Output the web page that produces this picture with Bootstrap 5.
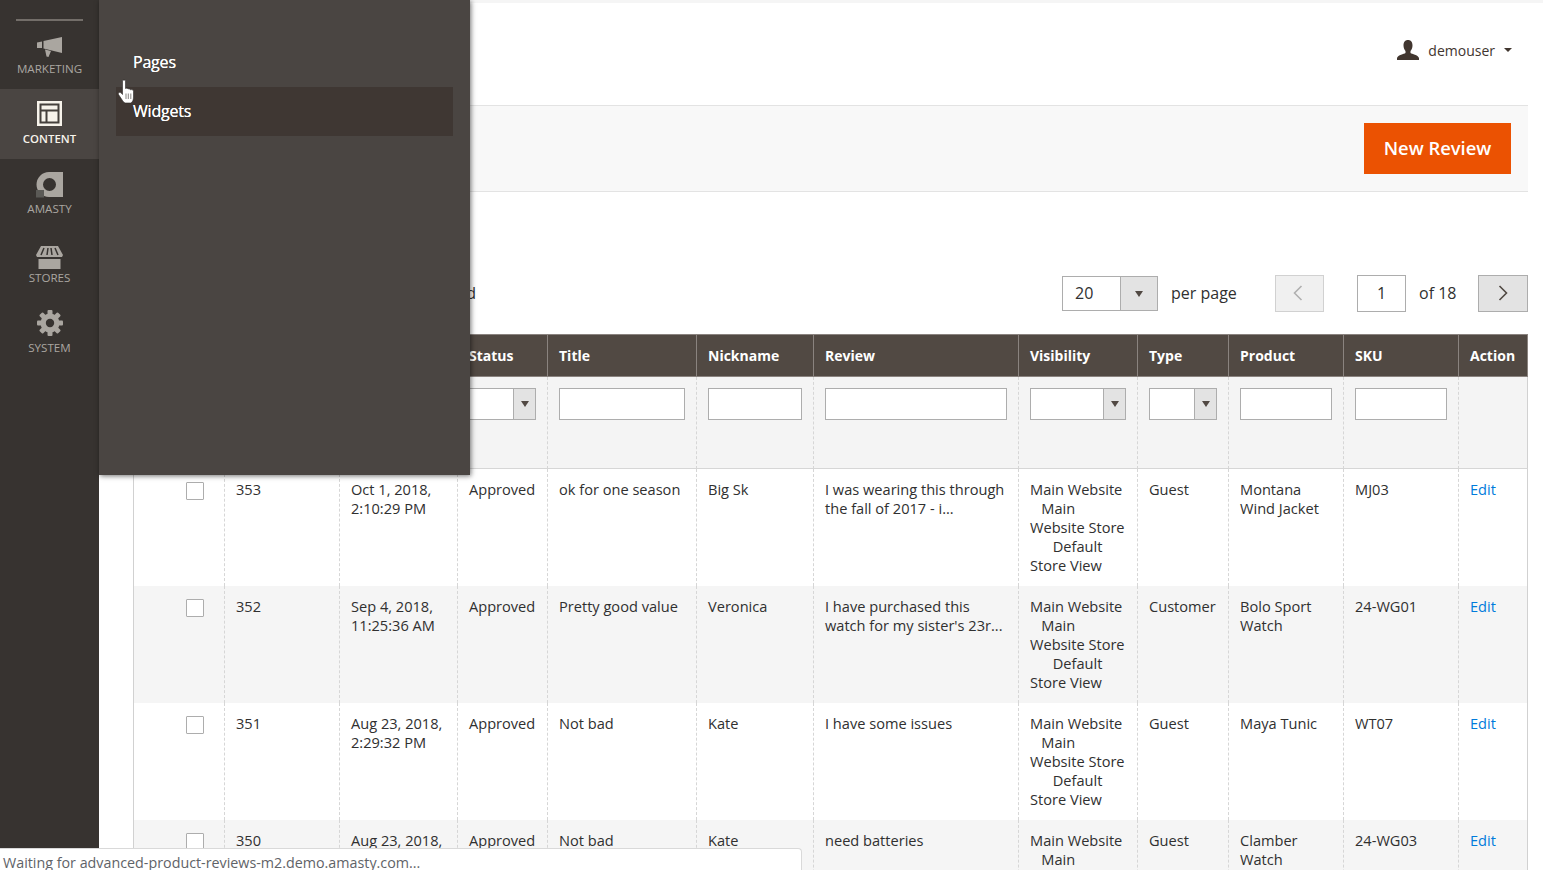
<!DOCTYPE html>
<html lang="en">
<head>
    <meta charset="UTF-8">
    <title>Reviews</title>
    <link href="https://cdn.jsdelivr.net/npm/bootstrap@5.3.2/dist/css/bootstrap.min.css" rel="stylesheet">
    <style>
        html, body { height: 870px; overflow: hidden; }
        body { font-family: "Open Sans", "Liberation Sans", sans-serif; font-size: 14px; line-height: 19px; color: #303030; background: #fff; }

        /* left menu */
        .side-menu { width: 99px; background: #373330; padding-top: 19px; }
        .side-rule { height: 2px; margin: 0 16px; background: #736e69; }
        .side-item { height: 70px; padding-top: 14px; color: #aaa6a0; font-size: 11.6px; line-height: 16px; text-transform: uppercase; text-align: center; }
        .side-item svg { display: block; margin: 0 auto 4px; fill: #aaa6a0; }
        .side-item.is-active { background: #4a4542; color: #f7f3eb; font-weight: 600; font-size: 11.4px; padding-top: 12px; }
        .side-item.is-active svg { margin-bottom: 5px; }
        .side-first { height: 68px; padding-top: 10px; }
        .side-amasty { padding-top: 13px; }
        .side-amasty svg { margin-bottom: 3px; }
        .side-stores { padding-top: 14px; }
        .side-stores .side-icon-box { margin-bottom: 1px; }
        .side-system { padding-top: 11px; }
        .side-icon-box { height: 26px; margin-bottom: 4px; display: flex; align-items: flex-end; justify-content: center; }
        .side-icon-box svg { margin: 0 auto; }

        .fly-menu { top: 0; left: 99px; width: 371px; height: 475px; background: #4a4542; box-shadow: 1px 1px 5px rgba(0,0,0,.55); padding: 38px 17px 0; }
        .fly-link { display: block; height: 49px; padding: 0 17px; color: #fff; font-size: 16px; line-height: 49px; letter-spacing: -.2px; text-decoration: none; text-shadow: 0 0 .6px #fff; }
        .fly-link.is-hover { background: #3f3733; }
        .hand-cursor { top: 79px; left: 118px; }

        /* header and action bar */
        .top-strip { height: 3px; background: #f5f5f5; }
        .top-head { height: 102px; padding: 0 31px 8px 0; }
        .user-name { color: #41362f; font-size: 14px; margin-left: 9px; }
        .user-caret { width: 0; height: 0; margin-left: 9px; border: 4px solid transparent; border-top: 4.5px solid #41362f; border-bottom: 0; }
        .action-bar { height: 87px; margin-right: 15px; padding-right: 17px; background: #f8f8f8; border-top: 1px solid #e3e3e3; border-bottom: 1px solid #e3e3e3; }
        .btn-new { width: 147px; height: 51px; padding: 0 0 2px; border: 0; border-radius: 0; background: #eb5202; color: #fff; font-size: 18.4px; font-weight: 600; line-height: 49px; }

        /* pager row */
        .grid-area { padding: 83px 15px 0 34px; }
        .pager-bar { height: 37px; margin-bottom: 22px; font-size: 16px; color: #303030; }
        .found-text { width: 343px; margin-right: 586px; text-align: right; }
        .size-select { width: 96px; height: 35px; border: 1px solid #adadad; background: #fff; }
        .size-select b { flex: 1; padding-left: 12px; font-weight: 400; line-height: 33px; }
        .arrow-box { background: #e3e3e3; border-left: 1px solid #adadad; }
        .arrow-box::after { content: ""; width: 0; height: 0; border: 4.5px solid transparent; border-top: 6px solid #514943; border-bottom: 0; }
        .size-select .arrow-box { width: 37px; }
        .per-page { width: 117px; padding-left: 13px; }
        .pager-btn { width: 49px; height: 37px; padding: 0 0 2px; border: 1px solid #adadad; background: #e3e3e3; color: #514943; }
        .pager-btn svg { display: block; margin: 0 auto; }
        .pager-btn.is-next { width: 50px; }
        .pager-btn.is-off { padding-right: 3px; background: #f0f0f0; border-color: #d1d1d1; color: #b0b0b0; }
        .page-box { width: 49px; height: 37px; margin-left: 33px; border: 1px solid #adadad; text-align: center; line-height: 35px; }
        .of-text { width: 72px; padding-left: 13px; }

        /* grid */
        .review-grid { table-layout: fixed; width: 1395px; margin: 0; border-collapse: separate; border-spacing: 0; font-size: 14.6px; }
        .review-grid col:nth-child(1) { width: 91px; }
        .review-grid col:nth-child(2) { width: 115px; }
        .review-grid col:nth-child(3) { width: 118px; }
        .review-grid col:nth-child(4) { width: 90px; }
        .review-grid col:nth-child(5) { width: 149px; }
        .review-grid col:nth-child(6) { width: 117px; }
        .review-grid col:nth-child(7) { width: 205px; }
        .review-grid col:nth-child(8) { width: 119px; }
        .review-grid col:nth-child(9) { width: 91px; }
        .review-grid col:nth-child(10) { width: 115px; }
        .review-grid col:nth-child(11) { width: 115px; }
        .review-grid col:nth-child(12) { width: 70px; }
        .review-grid > :not(caption) > * > * { padding: 11px 11px 11px; border: 0; box-shadow: none; background: transparent; color: #303030; vertical-align: top; }
        .review-grid > thead > .head-row > th { height: 43px; padding: 11px 11px 0; background: #514943; color: #fff; font-weight: 700; font-size: 14px; white-space: nowrap; border-top: 1px solid #8a837f; border-bottom: 1px solid #8a837f; border-left: 1px solid #8a837f; }
        .review-grid > thead > .head-row > th:last-child { border-right: 1px solid #8a837f; }
        .review-grid > thead > .filter-row > td { height: 92px; padding: 11px 11px 0; background: #f4f4f4; border-bottom: 1px solid #d6d6d6; border-left: 1px dashed #d6d6d6; }
        .review-grid > tbody > tr > td { height: 117px; border-left: 1px dashed #d6d6d6; }
        .review-grid > tbody > tr:nth-child(even) > td { background: #f5f5f5; }
        .review-grid > * > tr > *:first-child { border-left: 1px solid #d1d1d1; }
        .review-grid > * > tr > *:last-child { border-right: 1px solid #d1d1d1; }
        .filter-input { height: 32px; min-height: 32px; padding: 0 8px; border: 1px solid #adadad; border-radius: 0; background: #fff; }
        .filter-select { height: 32px; border: 1px solid #adadad; background: #fff; }
        .filter-select .arrow-box { width: 22px; }
        .row-check { display: block; width: 18px; height: 18px; margin: 2px 0 0 41px; border: 1px solid #adadad; border-radius: 1px; background: #fff; }
        .edit-link { color: #007bdb; text-decoration: none; }

        /* browser status bubble */
        .status-bubble { left: 0; bottom: 0; width: 802px; height: 22px; padding-left: 3px; background: #fff; border-top: 1px solid #d9d9d9; border-right: 1px solid #d9d9d9; border-top-right-radius: 4px; color: #5f6368; font-size: 14.3px; line-height: 27px; overflow: hidden; }
    </style>
</head>
<body>
    <div class="d-flex position-relative">
        <!-- Left menu -->
        <nav class="side-menu flex-shrink-0 vh-100">
            <div class="side-rule"></div>
            <div class="side-item side-first">
                <div class="side-icon-box">
                    <svg width="25" height="20" viewBox="0 0 25 20"><path d="M0 5.500 5 4.500V11H0ZM6.500 4 25 0V16L6.500 11.500ZM8 12.500 14 14 11.500 20 9.500 19.500Z"/></svg>
                </div>
                Marketing
            </div>
            <div class="side-item is-active">
                <svg width="25" height="25" viewBox="0 0 25 25">
                    <rect width="25" height="25" fill="#f7f3eb"/>
                    <path d="M3.500 3.500H21.500V21.500H3.500ZM3.500 9.500H21.500M9.500 9.500V21.500" fill="none" stroke="#45403c" stroke-width="2"/>
                </svg>
                Content
            </div>
            <div class="side-item side-amasty">
                <svg width="27" height="26" viewBox="0 0 27 26">
                    <path fill-rule="evenodd" d="M13 0H27V25H13A12.500 12.500 0 0 1 13 0ZM13.500 6A6.500 6.500 0 1 0 13.500 19 6.500 6.500 0 0 0 13.500 6Z"/>
                    <rect y="18" width="8" height="7.500" fill="#5b5a56"/>
                </svg>
                Amasty
            </div>
            <div class="side-item side-stores">
                <div class="side-icon-box">
                    <svg width="27" height="23" viewBox="0 0 27 23">
                        <path d="M5 0H22L27 9 26 11H1L0 9ZM2.500 13H24.500V23H2.500Z"/>
                        <path d="M8 2 5 9M12 2 11 9M15 2 16 9M19 2 22 9" stroke="#373330" stroke-width="1.500" fill="none"/>
                    </svg>
                </div>
                Stores
            </div>
            <div class="side-item side-system">
                <div class="side-icon-box">
                    <svg width="26" height="26" viewBox="0 0 26 26">
                        <circle cx="13" cy="13" r="9.500"/>
                        <rect x="10.500" y="0" width="5" height="26" rx="1"/>
                        <rect x="10.500" y="0" width="5" height="26" rx="1" transform="rotate(45 13 13)"/>
                        <rect x="10.500" y="0" width="5" height="26" rx="1" transform="rotate(90 13 13)"/>
                        <rect x="10.500" y="0" width="5" height="26" rx="1" transform="rotate(135 13 13)"/>
                        <circle cx="13" cy="13" r="4.200" fill="#373330"/>
                    </svg>
                </div>
                System
            </div>
        </nav>

        <main class="flex-grow-1">
            <div class="top-strip"></div>
            <div class="top-head d-flex align-items-center justify-content-end">
                <svg width="22" height="20" viewBox="0 0 22 20" fill="#41362f"><path d="M11 0C14 0 15.500 2.200 15.500 5.500 15.500 8 14.500 10 13.500 11V13C15 14 21 15 22 18V20H0V18C1 15 7 14 8.500 13V11C7.500 10 6.500 8 6.500 5.500 6.500 2.200 8 0 11 0Z"/></svg>
                <span class="user-name">demouser</span>
                <span class="user-caret"></span>
            </div>
            <div class="action-bar d-flex align-items-center justify-content-end">
                <button type="button" class="btn btn-new">New Review</button>
            </div>

            <div class="grid-area">
                <div class="pager-bar d-flex align-items-center">
                    <span class="found-text flex-shrink-0">353 records found</span>
                    <div class="size-select d-flex flex-shrink-0">
                        <b>20</b>
                        <span class="arrow-box d-flex align-items-center justify-content-center"></span>
                    </div>
                    <span class="per-page flex-shrink-0">per page</span>
                    <button type="button" class="pager-btn is-off flex-shrink-0">
                        <svg width="10" height="16" viewBox="0 0 10 16" fill="none" stroke="currentColor" stroke-width="1.600"><path d="M8.500 1 1.500 8 8.500 15"/></svg>
                    </button>
                    <div class="page-box flex-shrink-0">1</div>
                    <span class="of-text flex-shrink-0">of 18</span>
                    <button type="button" class="pager-btn is-next flex-shrink-0">
                        <svg width="10" height="16" viewBox="0 0 10 16" fill="none" stroke="currentColor" stroke-width="1.600"><path d="M1.500 1 8.500 8 1.500 15"/></svg>
                    </button>
                </div>

                <table class="table review-grid">
                    <colgroup>
                        <col><col><col><col><col><col><col><col><col><col><col><col>
                    </colgroup>
                    <thead>
                        <tr class="head-row">
                            <th></th><th>ID</th><th>Created</th><th>Status</th><th>Title</th><th>Nickname</th><th>Review</th><th>Visibility</th><th>Type</th><th>Product</th><th>SKU</th><th>Action</th>
                        </tr>
                        <tr class="filter-row">
                            <td></td>
                            <td><input class="form-control filter-input" type="text"></td>
                            <td><input class="form-control filter-input" type="text"></td>
                            <td><div class="filter-select d-flex justify-content-end"><span class="arrow-box d-flex align-items-center justify-content-center"></span></div></td>
                            <td><input class="form-control filter-input" type="text"></td>
                            <td><input class="form-control filter-input" type="text"></td>
                            <td><input class="form-control filter-input" type="text"></td>
                            <td><div class="filter-select d-flex justify-content-end"><span class="arrow-box d-flex align-items-center justify-content-center"></span></div></td>
                            <td><div class="filter-select d-flex justify-content-end"><span class="arrow-box d-flex align-items-center justify-content-center"></span></div></td>
                            <td><input class="form-control filter-input" type="text"></td>
                            <td><input class="form-control filter-input" type="text"></td>
                            <td></td>
                        </tr>
                    </thead>
                    <tbody id="reviewRows"></tbody>
                </table>
            </div>
        </main>

        <!-- Content flyout, open over the page -->
        <div class="fly-menu position-absolute">
            <a class="fly-link" href="#">Pages</a>
            <a class="fly-link is-hover" href="#">Widgets</a>
        </div>
        <svg class="hand-cursor position-absolute" width="18" height="25" viewBox="0 0 18 25">
            <path d="M4.500 2C4.500 .600 7.500 .600 7.500 2V9.500C9 9 10 9.300 10 10 11 9.500 12 9.800 12.300 10.800 13.500 10.300 15.500 10.800 15.500 12.500V18C15.500 21 14.500 23 13 24H7.500C5.500 23.500 4.500 21.500 3.500 20L.500 15.500C-.200 14 1.500 12.500 3 13.800L4.500 15.500Z" fill="#fff" stroke="#2b2826" stroke-width=".6"/>
            <path d="M8 14.500V20M10.300 14.500V20M12.800 14.500V20" stroke="#55504c" stroke-width=".7"/>
        </svg>
        <div class="status-bubble position-fixed">Waiting for advanced-product-reviews-m2.demo.amasty.com...</div>
    </div>

<script src="https://cdn.jsdelivr.net/npm/bootstrap@5.3.2/dist/js/bootstrap.bundle.min.js"></script>
<script>
const stores = 'Main Website<br>&nbsp;&nbsp;&nbsp;Main<br>Website Store<br>&nbsp;&nbsp;&nbsp;&nbsp;&nbsp;&nbsp;Default<br>Store View';
const reviews = [
    { id: 353, created: 'Oct 1, 2018,<br>2:10:29 PM', title: 'ok for one season', nick: 'Big Sk', text: 'I was wearing this through the fall of 2017 - i...', type: 'Guest', product: 'Montana Wind Jacket', sku: 'MJ03' },
    { id: 352, created: 'Sep 4, 2018,<br>11:25:36 AM', title: 'Pretty good value', nick: 'Veronica', text: 'I have purchased this watch for my sister\'s 23r...', type: 'Customer', product: 'Bolo Sport Watch', sku: '24-WG01' },
    { id: 351, created: 'Aug 23, 2018,<br>2:29:32 PM', title: 'Not bad', nick: 'Kate', text: 'I have some issues', type: 'Guest', product: 'Maya Tunic', sku: 'WT07' },
    { id: 350, created: 'Aug 23, 2018,<br>1:14:02 PM', title: 'Not bad', nick: 'Kate', text: 'need batteries', type: 'Guest', product: 'Clamber Watch', sku: '24-WG03' }
];
document.getElementById('reviewRows').innerHTML = reviews.map(r => `
    <tr>
        <td><span class="row-check"></span></td>
        <td>${r.id}</td>
        <td>${r.created}</td>
        <td>Approved</td>
        <td>${r.title}</td>
        <td>${r.nick}</td>
        <td>${r.text}</td>
        <td>${stores}</td>
        <td>${r.type}</td>
        <td>${r.product}</td>
        <td>${r.sku}</td>
        <td><a class="edit-link" href="#">Edit</a></td>
    </tr>`).join('');
</script>
</body>
</html>
